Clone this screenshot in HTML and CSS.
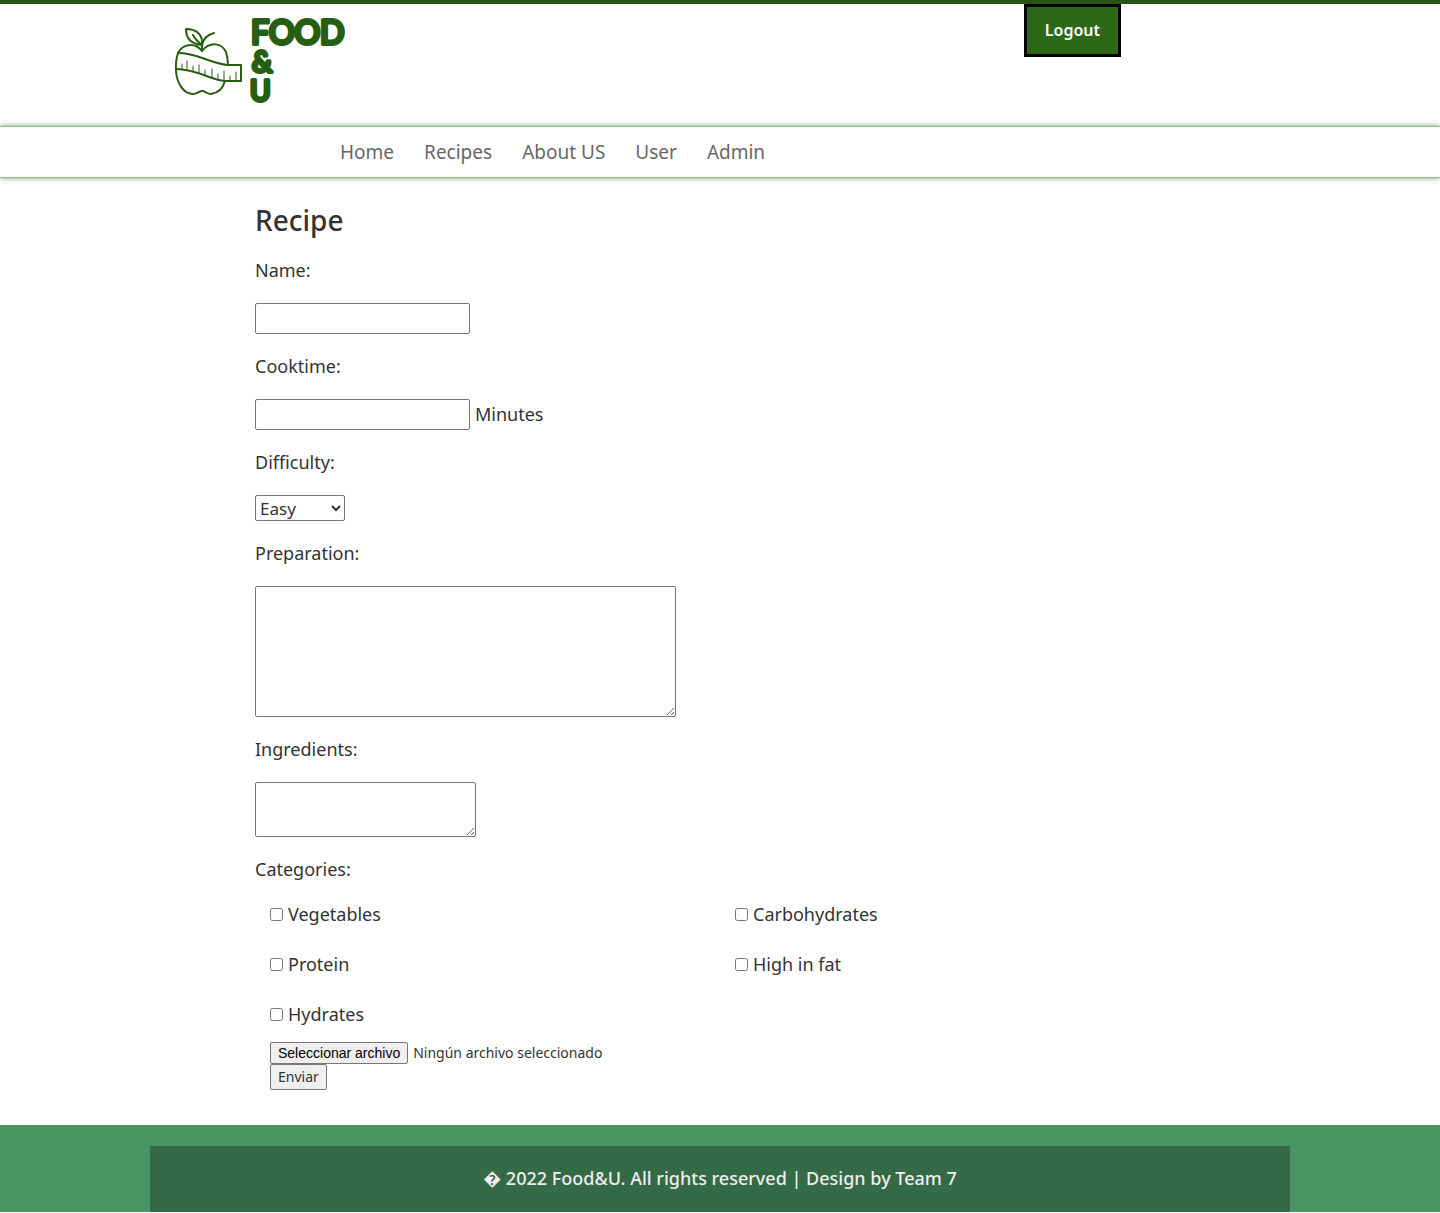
FILE: index.html
```html
<!DOCTYPE html>
<html lang="es">
<head>
<meta charset="utf-8">
<meta name="viewport" content="width=device-width, initial-scale=1">
<title>Food&amp;U - Recipe</title>
<link rel="stylesheet" href="styles.css">
</head>
<body>
<header class="header">
  <div class="container header-row">
    <a class="logo" href="#" aria-label="Food&amp;U">
      <svg width="200" height="100" viewBox="0 0 200 100">
        <g class="logo-apple">
          <path d="M3 42 C7 34 19 30 27 40 C35 30 47 32 51 41 Q53 47 53 54"/>
          <path d="M3 42 C1 48 0.500 53 1 60 C2 73 9 83 18 83 C22 83 24 80 27 80 C30 80 32 83 36 83 C43 82 48 77 50 70"/>
          <path d="M3 42 C23 42 31 51 52 54 H66 V70 H50 C35 69 22 58 1 58"/>
          <path d="M27 40 V34 C28 28 32 24 39 22"/>
          <path d="M27 34 C28 24 22 18 11 18 C11 27 16 33 27 34 C23 31 20 28 18 24"/>
          <path class="logo-ticks" d="M7 58 V53 M12 59 V50 M18 60 V55 M24 62 V54 M30 64 V59 M37 67 V58 M43 69 V63 M49 70 V60 M55 70 V65 M61 70 V61"/>
        </g>
        <g class="logo-word">
          <text x="76" y="33">FOOD</text>
          <text class="logo-small" x="77" y="61">&amp;</text>
          <text class="logo-small" x="75" y="90">U</text>
        </g>
      </svg>
    </a>
    <button class="logout" type="button">Logout</button>
  </div>
</header>
<nav class="nav">
  <ul class="container nav-list">
    <li><a href="#">Home</a></li>
    <li><a href="#">Recipes</a></li>
    <li><a href="#">About US</a></li>
    <li><a href="#">User</a></li>
    <li><a href="#">Admin</a></li>
  </ul>
</nav>
<main class="main">
  <form class="form">
    <h1>Recipe</h1>
    <label class="caption" for="name">Name:</label>
    <input class="field" id="name" type="text">
    <label class="caption" for="cooktime">Cooktime:</label>
    <div class="with-unit"><input class="field" id="cooktime" type="text"><span>Minutes</span></div>
    <label class="caption" for="difficulty">Difficulty:</label>
    <select id="difficulty"><option>Easy</option><option>Medium</option><option>Hard</option></select>
    <label class="caption" for="preparation">Preparation:</label>
    <textarea class="preparation" id="preparation"></textarea>
    <label class="caption" for="ingredients">Ingredients:</label>
    <textarea class="ingredients" id="ingredients"></textarea>
    <fieldset>
      <legend class="caption">Categories:</legend>
      <div class="categories">
        <label><input type="checkbox">Vegetables</label>
        <label><input type="checkbox">Carbohydrates</label>
        <label><input type="checkbox">Protein</label>
        <label><input type="checkbox">High in fat</label>
        <label><input type="checkbox">Hydrates</label>
      </div>
      <div class="actions">
        <div class="file">
          <input class="file-input" id="photo" type="file">
          <label class="file-button" for="photo">Seleccionar archivo</label>
          <span>Ningún archivo seleccionado</span>
        </div>
        <button class="submit" type="submit">Enviar</button>
      </div>
    </fieldset>
  </form>
</main>
<footer class="footer">
  <p class="copyright">&#xFFFD; 2022 Food&amp;U. All rights reserved | Design by Team 7</p>
</footer>
</body>
</html>
```
FILE: styles.css
```css
* { box-sizing: border-box; }

body {
  margin: 0;
  background: #fff;
  color: #333;
  font: 18px/25px "Noto Sans", "DejaVu Sans", sans-serif;
}

.container { max-width: 1140px; margin: 0 auto; }

.header { border-top: 4px solid #265512; }
.header-row {
  display: flex;
  justify-content: space-between;
  align-items: flex-start;
  min-height: 122px;
  padding: 0 169px 0 25px;
}
.logo { display: block; padding-top: 7px; }
.logo svg { display: block; overflow: visible; }
.logo-apple {
  fill: none;
  stroke: #265f12;
  stroke-width: 2;
  stroke-linecap: round;
  stroke-linejoin: round;
}
.logo-ticks { stroke-width: 1; }
.logo-word {
  fill: #265f12;
  stroke: #265f12;
  stroke-width: 4;
  stroke-linejoin: round;
  font: 400 32px Lato, sans-serif;
}
.logo-small { font-size: 28px; }
.logout {
  padding: 10px 18px;
  border: 3px solid #000;
  background: #2d6817;
  color: #fff;
  font: 600 16px/27px "Noto Sans", sans-serif;
}

.nav {
  border: solid #8fbc8f;
  border-width: 1px 0;
  box-shadow: 0 0 5px #5f9f5f;
}
.nav-list {
  display: flex;
  flex-wrap: wrap;
  gap: 0 30px;
  padding: 0 0 0 190px;
  list-style: none;
}
.nav a {
  display: block;
  color: #666;
  font-size: 19px;
  line-height: 50px;
  text-decoration: none;
}

.main { max-width: 960px; margin: 0 auto; padding: 24px 15px 35px; }
.form {
  display: flex;
  flex-direction: column;
  align-items: flex-start;
  gap: 20px;
}
h1 { margin: 0; font-size: 28px; font-weight: 500; line-height: 36px; }
.caption { display: block; padding: 0; }
.field, select, textarea {
  border: 1px solid #767676;
  border-radius: 2px;
  background: #fff;
  color: #333;
  font: inherit;
}
.field { width: 215px; height: 31px; }
.with-unit { display: flex; align-items: center; gap: 5px; }
select { width: 90px; height: 26px; padding: 0; font-size: 17px; }
textarea { display: block; max-width: 100%; }
.preparation { width: 421px; height: 131px; }
.ingredients { width: 221px; height: 55px; }

fieldset { width: 100%; margin: 0; padding: 0; border: 0; }
.categories {
  display: grid;
  grid-template-columns: 1fr 1fr;
  padding-top: 7px;
}
.categories label {
  display: flex;
  align-items: center;
  gap: 5px;
  height: 50px;
  padding-left: 15px;
}
.categories input { width: 13px; height: 13px; margin: 0; }
.actions {
  padding: 3px 15px 0;
  font-size: 14px;
  line-height: 20px;
}
.file { display: flex; align-items: center; gap: 5px; position: relative; }
.file-input { position: absolute; width: 1px; height: 1px; opacity: 0; }
.file-button, .submit {
  border: 1px solid #767676;
  border-radius: 2px;
  background: #efefef;
}
.file-button {
  padding: 0 7px;
  color: #000;
  font-family: "Liberation Sans", Arial, sans-serif;
}
.submit {
  display: block;
  padding: 2px 7px;
  color: #333;
  font: 14px/20px "Noto Sans", sans-serif;
}

.footer { padding-top: 21px; background: #4a9564; }
.copyright {
  max-width: 1140px;
  margin: 0 auto;
  padding: 20px 15px 21px;
  background: #346a46;
  color: #eee;
  font-weight: 500;
  text-align: center;
}
```
